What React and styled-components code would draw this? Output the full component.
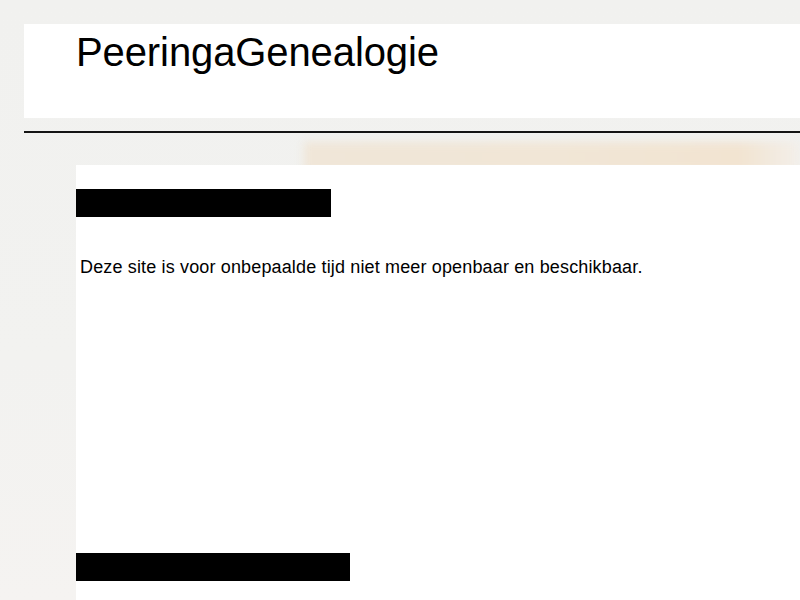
import React from "react";
import styled, { createGlobalStyle } from "styled-components";

const GlobalStyle = createGlobalStyle`
  html, body {
    margin: 0;
    padding: 0;
    height: 100%;
  }
  body {
    background: #f1f1ef;
    font-family: "Liberation Sans", Arial, sans-serif;
    color: #000;
    overflow: hidden;
  }
`;

const App = () => {
  return (
    <>
      <GlobalStyle />
      <Page>
        <Header>
          <h1>PeeringaGenealogie</h1>
        </Header>
        <Rule />
        <Gap>
          <Glow />
        </Gap>
        <Panel>
          <Redacted $width={255} $top={24} />
          <Notice>
            Deze site is voor onbepaalde tijd niet meer openbaar en beschikbaar.
          </Notice>
          <Redacted $width={274} $top={276} />
        </Panel>
      </Page>
    </>
  );
};

export default App;

const Page = styled.div`
  padding: 24px 0 0 24px;
  min-height: 100vh;
  box-sizing: border-box;
  display: flex;
  flex-direction: column;
  background: linear-gradient(
    180deg,
    #f1f1ef 0%,
    #f2f2f0 60%,
    #f5f3f1 100%
  );
`;

const Header = styled.div`
  background: #fff;
  height: 94px;
  padding: 5px 0 0 52px;
  box-sizing: border-box;

  h1 {
    margin: 0;
    font-size: 40px;
    font-weight: 400;
    line-height: 46px;
    letter-spacing: -0.1px;
  }
`;

const Rule = styled.div`
  margin-top: 13px;
  height: 2px;
  background: #141414;
`;

const Gap = styled.div`
  height: 32px;
  padding: 9px 0 0 280px;
  box-sizing: border-box;
  overflow: hidden;
`;

const Glow = styled.div`
  height: 30px;
  background: linear-gradient(
    90deg,
    #f0e6d8 0%,
    #f1e6d6 50%,
    #f2e4d1 88%,
    #f3efea 100%
  );
  filter: blur(4px);
`;

const Panel = styled.div`
  flex: 1;
  margin-left: 52px;
  background: #fff;
  padding: 0;
`;

const Redacted = styled.div`
  width: ${(p) => p.$width}px;
  height: 28px;
  margin-top: ${(p) => p.$top}px;
  background: #000;
`;

const Notice = styled.p`
  margin: 40px 0 0 4px;
  font-size: 18px;
  line-height: 20px;
  letter-spacing: 0.15px;
`;
